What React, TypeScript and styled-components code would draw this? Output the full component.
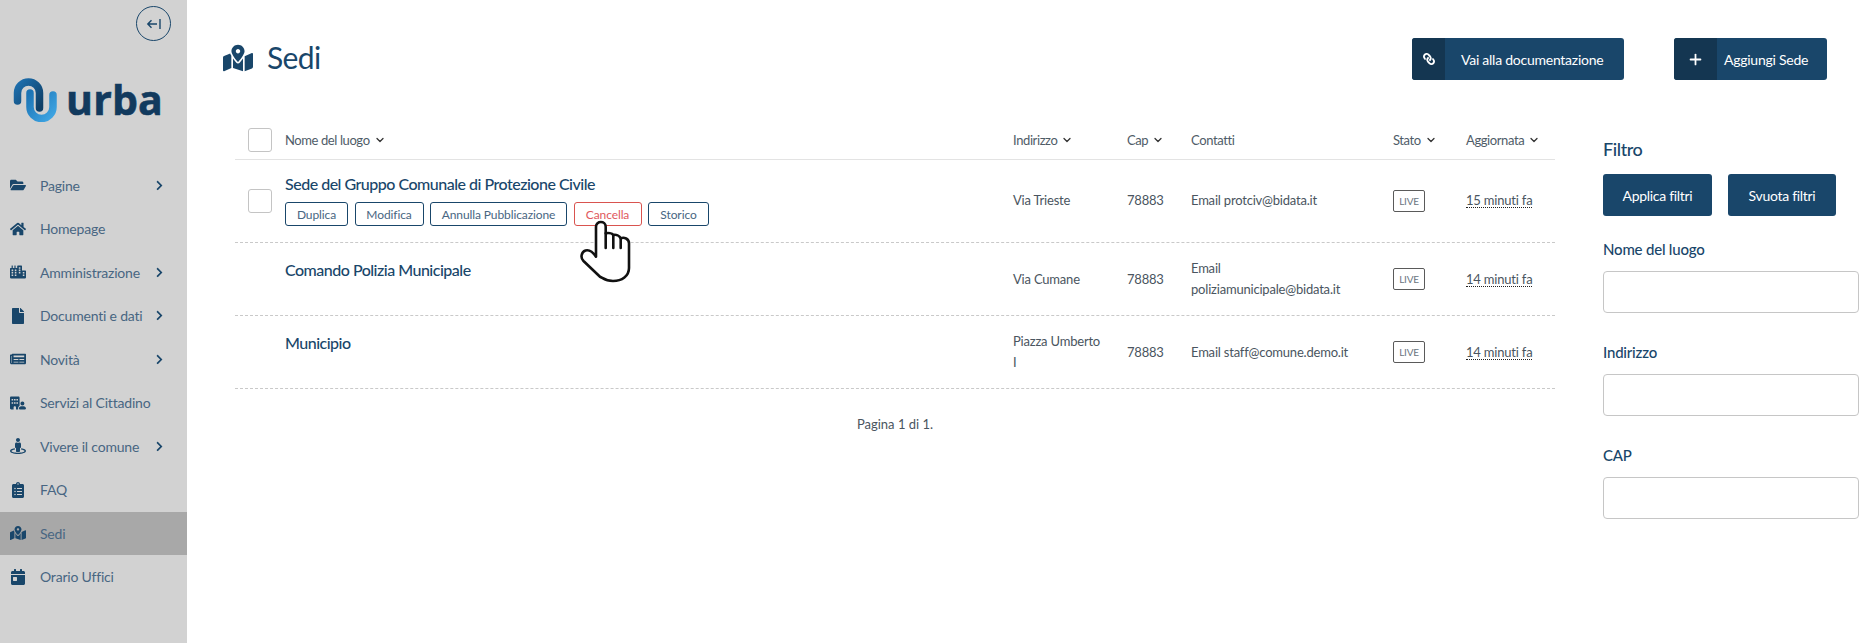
import React from "react";
import styled, { createGlobalStyle } from "styled-components";
import { FaFolderOpen, FaHome, FaCity, FaFile, FaNewspaper, FaStreetView, FaClipboardList, FaMapMarkedAlt, FaCalendarDay, FaLink, FaChevronRight } from "react-icons/fa";
import { FaBuildingUser } from "react-icons/fa6";
import { LuChevronDown, LuPlus } from "react-icons/lu";

const FONT = `"Lato", "Noto Sans", sans-serif`;
const NAVY = "#19466a";
const DARK = "#143651";

const Global = createGlobalStyle`
  html, body { margin: 0; padding: 0; background: #fff; }
  body { font-family: ${FONT}; color: #4a5560; }
  * { box-sizing: border-box; }
`;

const Page = styled.div`
  position: relative;
  display: flex;
  width: 1875px;
  height: 643px;
  overflow: hidden;
  background: #fff;
`;

const Sidebar = styled.aside`
  flex: 0 0 187px;
  background: #d2d2d2;
  display: flex;
  flex-direction: column;
`;

const ToggleRow = styled.div`
  display: flex;
  justify-content: flex-end;
  padding: 6px 16px 0 0;
`;

const Toggle = styled.button`
  width: 35px;
  height: 35px;
  border: 1px solid ${NAVY};
  border-radius: 50%;
  background: transparent;
  padding: 0;
  display: flex;
  align-items: center;
  justify-content: center;
  color: ${NAVY};
`;

const LogoRow = styled.div`
  display: flex;
  align-items: center;
  gap: 9px;
  margin: 36px 0 0 13px;
  height: 45px;
`;

const LogoWord = styled.span`
  font-family: "Open Sans", sans-serif;
  font-weight: 700;
  font-size: 41px;
  line-height: 45px;
  letter-spacing: 0.2px;
  color: #123a5e;
  -webkit-text-stroke: 0.6px #123a5e;
`;

const Nav = styled.nav`
  margin-top: 41.5px;
  display: flex;
  flex-direction: column;
`;

const NavItem = styled.div<{ $active?: boolean }>`
  height: 43.5px;
  display: flex;
  align-items: center;
  padding: 0 22px 0 3px;
  background: ${(p) => (p.$active ? "#a8a8a8" : "transparent")};
  color: ${NAVY};
`;

const NavIcon = styled.span`
  flex: 0 0 30px;
  width: 30px;
  display: flex;
  justify-content: center;
  font-size: 16px;
`;

const NavLabel = styled.span`
  flex: 1;
  margin-left: 7px;
  font-size: 14px;
  letter-spacing: -0.2px;
  color: #486682;
`;

const NavChevron = styled.span`
  display: flex;
  font-size: 11px;
  color: ${NAVY};
`;

const Main = styled.main`
  flex: 1;
  min-width: 0;
  padding: 38px 16px 0 36px;
  display: flex;
  flex-direction: column;
`;

const Header = styled.header`
  display: flex;
  align-items: center;
  height: 42px;
`;

const TitleIcon = styled.span`
  display: flex;
  font-size: 30px;
  color: ${NAVY};
  margin: -2px 14px 0 0;
`;

const Title = styled.h1`
  margin: -4px 0 0;
  font-size: 30px;
  line-height: 42px;
  font-weight: 400;
  letter-spacing: -0.6px;
  color: ${NAVY};
  flex: 1;
`;

const HeadButton = styled.button<{ $mr?: number; $icon: number; $w: number; $pl: number }>`
  width: ${(p) => p.$w}px;
  height: 42px;
  margin-right: ${(p) => p.$mr ?? 0}px;
  padding: 0;
  border: 0;
  border-radius: 3px;
  background: ${NAVY};
  color: #fff;
  display: grid;
  grid-template-columns: ${(p) => p.$icon}px 1fr;
  align-items: stretch;
  overflow: hidden;
  font-family: ${FONT};
  font-size: 14px;
  letter-spacing: -0.25px;
  text-align: left;

  & > span:last-child {
    padding-left: ${(p) => p.$pl}px;
  }
`;

const HeadIcon = styled.span<{ $flip?: boolean }>`
  background: ${DARK};
  display: flex;
  align-items: center;
  justify-content: center;
  font-size: 12px;

  svg {
    transform: ${(p) => (p.$flip ? "scaleX(-1)" : "none")};
  }
`;

const HeadText = styled.span`
  align-self: center;
  white-space: nowrap;
`;

const Content = styled.div`
  display: flex;
  gap: 48px;
  margin-top: 40px;
  margin-left: 12px;
`;

const Table = styled.div`
  flex: 0 0 1320px;
`;

const COLS = "50px 728px 114px 64px 202px 73px 89px";

const HeadRow = styled.div`
  display: grid;
  grid-template-columns: ${COLS};
  align-items: center;
  height: 39.5px;
  padding-top: 2px;
  border-bottom: 1.5px solid #e3e3e3;
  font-size: 13px;
  letter-spacing: -0.4px;
  color: #4f5c68;
`;

const Row = styled.div<{ $h: number }>`
  display: grid;
  grid-template-columns: ${COLS};
  align-items: center;
  height: ${(p) => p.$h}px;
  border-bottom: 1px dashed #c9c9c9;
  font-size: 13px;
  line-height: 21px;
  letter-spacing: -0.2px;
  color: #4a5560;
`;

const CheckCell = styled.div`
  display: flex;
  justify-content: flex-end;
  padding-right: 13px;
`;

const Check = styled.span`
  display: block;
  width: 24px;
  height: 24px;
  background: #fff;
  border: 1px solid #c4c4c4;
  border-radius: 3px;
`;

const HeadCell = styled.div`
  display: flex;
  align-items: center;
  gap: 4px;
  white-space: nowrap;

  svg {
    color: #333;
    stroke-width: 2.6;
  }
`;

const NameCell = styled.div<{ $top: number }>`
  align-self: start;
  padding-top: ${(p) => p.$top}px;
`;

const RowTitle = styled.div`
  font-size: 16px;
  line-height: 24px;
  font-weight: 500;
  letter-spacing: -0.5px;
  color: ${NAVY};
`;

const Actions = styled.div`
  display: flex;
  gap: 6.5px;
  margin-top: 6px;
`;

const Action = styled.button<{ $danger?: boolean; $w: number }>`
  width: ${(p) => p.$w}px;
  height: 24px;
  padding: 0;
  background: #fff;
  border: 1px solid ${(p) => (p.$danger ? "#d9534f" : NAVY)};
  border-radius: 3px;
  color: ${(p) => (p.$danger ? "#e0585c" : "#486682")};
  font-family: ${FONT};
  font-size: 12px;
  letter-spacing: -0.1px;
`;

const Live = styled.span`
  display: inline-flex;
  align-items: center;
  justify-content: center;
  width: 32px;
  height: 22px;
  border: 1px solid #5a5a5a;
  border-radius: 2px;
  font-size: 10px;
  color: #6b7580;
`;

const Time = styled.span`
  border-bottom: 1px dotted #222;
  line-height: 14px;
  display: inline-block;
  white-space: nowrap;
`;

const Pager = styled.div`
  margin-top: 25px;
  text-align: center;
  font-size: 13px;
  line-height: 20px;
  color: #4a5560;
`;

const Filter = styled.aside`
  flex: 0 0 256px;
`;

const FilterTitle = styled.h2`
  margin: 17px 0 13px;
  font-size: 18px;
  line-height: 24px;
  font-weight: 500;
  letter-spacing: -0.4px;
  color: ${NAVY};
`;

const FilterButtons = styled.div`
  display: flex;
  gap: 16px;
`;

const FilterButton = styled.button<{ $w: number }>`
  width: ${(p) => p.$w}px;
  height: 42px;
  border: 0;
  border-radius: 3px;
  background: ${NAVY};
  color: #fff;
  font-family: ${FONT};
  font-size: 14px;
  letter-spacing: -0.3px;
`;

const Fields = styled.div`
  display: flex;
  flex-direction: column;
  gap: 29px;
  margin-top: 23px;
`;

const Field = styled.label`
  display: block;
`;

const FieldLabel = styled.span`
  display: block;
  font-size: 15px;
  line-height: 20px;
  font-weight: 500;
  letter-spacing: -0.2px;
  color: ${NAVY};
  margin-bottom: 12px;
`;

const Input = styled.input`
  display: block;
  width: 100%;
  height: 42px;
  border: 1px solid #c6c6c6;
  border-radius: 4px;
  background: #fff;
`;

const Cursor = styled.svg`
  position: absolute;
  left: 575px;
  top: 220px;
  width: 60px;
  height: 65px;
`;

const Logo = () => (
  <svg width="44" height="44" viewBox="0 0 44 44" fill="none">
    <defs>
      <linearGradient id="lg1" x1="0" y1="0" x2="1" y2="1">
        <stop offset="0" stopColor="#1d6fae" />
        <stop offset="1" stopColor="#0f3f66" />
      </linearGradient>
      <linearGradient id="lg2" x1="0" y1="0" x2="1" y2="1">
        <stop offset="0" stopColor="#1c74b5" />
        <stop offset="1" stopColor="#3fa6e4" />
      </linearGradient>
    </defs>
    <path d="M4.5 23 V15 A11 11 0 0 1 26.5 15 V30" stroke="url(#lg1)" strokeWidth="7.5" strokeLinecap="round" />
    <path d="M17 15 V29 A11.5 11.5 0 0 0 40 29 V17" stroke="url(#lg2)" strokeWidth="7.5" strokeLinecap="round" />
  </svg>
);

const items: { icon: React.ReactNode; label: string; chevron?: boolean; active?: boolean }[] = [
  { icon: <FaFolderOpen />, label: "Pagine", chevron: true },
  { icon: <FaHome />, label: "Homepage" },
  { icon: <FaCity />, label: "Amministrazione", chevron: true },
  { icon: <FaFile />, label: "Documenti e dati", chevron: true },
  { icon: <FaNewspaper />, label: "Novità", chevron: true },
  { icon: <FaBuildingUser />, label: "Servizi al Cittadino" },
  { icon: <FaStreetView />, label: "Vivere il comune", chevron: true },
  { icon: <FaClipboardList />, label: "FAQ" },
  { icon: <FaMapMarkedAlt />, label: "Sedi", active: true },
  { icon: <FaCalendarDay />, label: "Orario Uffici" },
];

const Sort = () => <LuChevronDown size={12} />;

const rows = [
  { top: 14.5, h: 73, title: "Comando Polizia Municipale", address: ["Via Cumane"], contact: ["Email", "poliziamunicipale@bidata.it"], time: "14 minuti fa" },
  { top: 15, h: 73, title: "Municipio", address: ["Piazza Umberto", "I"], contact: ["Email staff@comune.demo.it"], time: "14 minuti fa" },
];

const Lines = ({ lines }: { lines: string[] }) => (
  <div>
    {lines.map((l, i) => (
      <React.Fragment key={l}>
        {i > 0 && <br />}
        {l}
      </React.Fragment>
    ))}
  </div>
);

export default function App() {
  return (
    <Page>
      <Global />
      <Sidebar>
        <ToggleRow>
          <Toggle aria-label="Chiudi menu">
            <svg width="16" height="14" viewBox="0 0 16 14" fill="none" stroke="currentColor" strokeWidth="1.4">
              <path d="M11 7H2M5.5 3.2 1.8 7l3.7 3.8M14 2v10" />
            </svg>
          </Toggle>
        </ToggleRow>
        <LogoRow>
          <Logo />
          <LogoWord>urba</LogoWord>
        </LogoRow>
        <Nav>
          {items.map((it) => (
            <NavItem key={it.label} $active={it.active}>
              <NavIcon>{it.icon}</NavIcon>
              <NavLabel>{it.label}</NavLabel>
              {it.chevron && (
                <NavChevron>
                  <FaChevronRight />
                </NavChevron>
              )}
            </NavItem>
          ))}
        </Nav>
      </Sidebar>
      <Main>
        <Header>
          <TitleIcon>
            <FaMapMarkedAlt />
          </TitleIcon>
          <Title>Sedi</Title>
          <HeadButton $w={212} $icon={33} $mr={50} $pl={16}>
            <HeadIcon $flip>
              <FaLink />
            </HeadIcon>
            <HeadText>Vai alla documentazione</HeadText>
          </HeadButton>
          <HeadButton $w={153} $icon={43} $mr={32} $pl={7}>
            <HeadIcon>
              <LuPlus size={17} strokeWidth={2.5} />
            </HeadIcon>
            <HeadText>Aggiungi Sede</HeadText>
          </HeadButton>
        </Header>
        <Content>
          <Table>
            <HeadRow>
              <CheckCell>
                <Check />
              </CheckCell>
              <HeadCell>
                Nome del luogo <Sort />
              </HeadCell>
              <HeadCell>
                Indirizzo <Sort />
              </HeadCell>
              <HeadCell>
                Cap <Sort />
              </HeadCell>
              <HeadCell>Contatti</HeadCell>
              <HeadCell>
                Stato <Sort />
              </HeadCell>
              <HeadCell>
                Aggiornata <Sort />
              </HeadCell>
            </HeadRow>
            <Row $h={83.5}>
              <CheckCell>
                <Check />
              </CheckCell>
              <NameCell $top={12.5}>
                <RowTitle>Sede del Gruppo Comunale di Protezione Civile</RowTitle>
                <Actions>
                  <Action $w={63}>Duplica</Action>
                  <Action $w={69}>Modifica</Action>
                  <Action $w={137}>Annulla Pubblicazione</Action>
                  <Action $w={68} $danger>
                    Cancella
                  </Action>
                  <Action $w={61}>Storico</Action>
                </Actions>
              </NameCell>
              <div>Via Trieste</div>
              <div>78883</div>
              <div>Email protciv@bidata.it</div>
              <div>
                <Live>LIVE</Live>
              </div>
              <div>
                <Time>15 minuti fa</Time>
              </div>
            </Row>
            {rows.map((r) => (
              <Row $h={r.h} key={r.title}>
                <div />
                <NameCell $top={r.top}>
                  <RowTitle>{r.title}</RowTitle>
                </NameCell>
                <Lines lines={r.address} />
                <div>78883</div>
                <Lines lines={r.contact} />
                <div>
                  <Live>LIVE</Live>
                </div>
                <div>
                  <Time>{r.time}</Time>
                </div>
              </Row>
            ))}
            <Pager>Pagina 1 di 1.</Pager>
          </Table>
          <Filter>
            <FilterTitle>Filtro</FilterTitle>
            <FilterButtons>
              <FilterButton $w={109}>Applica filtri</FilterButton>
              <FilterButton $w={108}>Svuota filtri</FilterButton>
            </FilterButtons>
            <Fields>
              <Field>
                <FieldLabel>Nome del luogo</FieldLabel>
                <Input />
              </Field>
              <Field>
                <FieldLabel>Indirizzo</FieldLabel>
                <Input />
              </Field>
              <Field>
                <FieldLabel>CAP</FieldLabel>
                <Input />
              </Field>
            </Fields>
          </Filter>
        </Content>
      </Main>
      <Cursor viewBox="0 0 60 65" fill="#fff" stroke="#111" strokeWidth="2.6" strokeLinejoin="round" strokeLinecap="round">
        <path d="M21 6.7C21 0.5 30.7 0.5 30.7 6.7V13.3C33 12.8 37 13 38.3 15C41 14.4 44.5 15.5 45.7 18.3C49 17 54 18.5 54 23.3V48C54 56 47 61 38 61C30 61 28 58 25 56.7L8.5 41C5 37.5 6.5 32 10.5 30.5C14 29.5 17.5 31.5 21 36.7Z" />
        <path d="M38.3 15V28M45.7 18.3V28M30.7 13.3V28" fill="none" />
      </Cursor>
    </Page>
  );
}
